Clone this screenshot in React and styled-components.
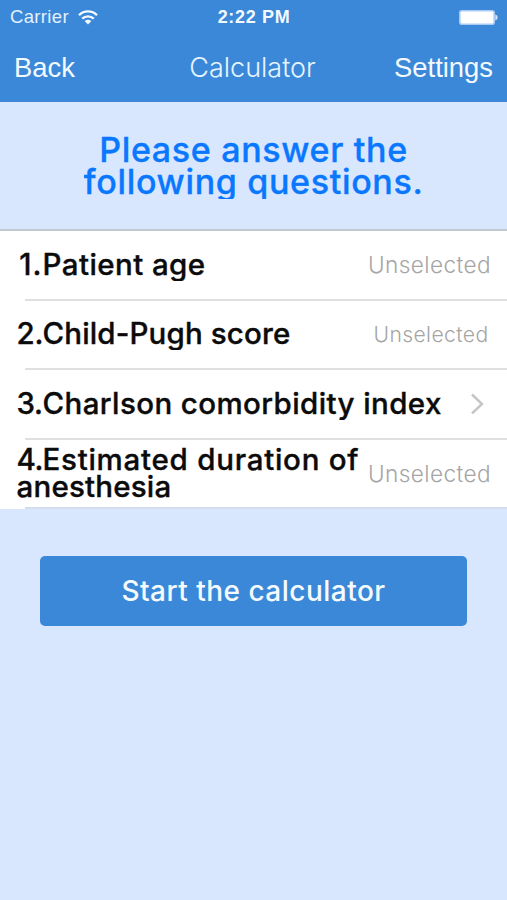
import React from "react";
import styled, { createGlobalStyle } from "styled-components";

const GlobalStyle = createGlobalStyle`
  * { box-sizing: border-box; }
  body { margin: 0; background: #d9e7fe; }
`;

const Screen = styled.div`
  width: 507px;
  height: 900px;
  display: flex;
  flex-direction: column;
  background: #d9e7fe;
  font-family: Inter, "Liberation Sans", sans-serif;
  overflow: hidden;
`;

const Header = styled.header`
  height: 102px;
  flex: none;
  background: #3c88d8;
  border-bottom: 1px solid #3f87d2;
  color: #f2faff;
  font-family: "Liberation Sans", sans-serif;
`;

const StatusBar = styled.div`
  height: 34px;
  display: grid;
  grid-template-columns: 1fr auto 1fr;
  align-items: center;
  padding: 0 9px 0 10px;
`;

const Carrier = styled.div`
  display: flex;
  align-items: center;
  gap: 9px;
  font-size: 18.5px;
  line-height: 34px;
  letter-spacing: 0.35px;
  color: #e2f1fe;
`;

const Clock = styled.div`
  font-size: 18px;
  font-weight: 700;
  line-height: 34px;
  letter-spacing: 0.65px;
`;

const BatterySlot = styled.div`
  display: flex;
  justify-content: flex-end;
`;

const NavBar = styled.nav`
  height: 67px;
  display: grid;
  grid-template-columns: 1fr auto 1fr;
  align-items: center;
  padding: 0 14px 0 14px;
`;

const NavButton = styled.button`
  justify-self: ${(p) => p.$side};
  padding: 0;
  border: 0;
  background: none;
  color: inherit;
  font: 400 27.4px/67px "Liberation Sans", sans-serif;
`;

const NavTitle = styled.h1`
  margin: 0;
  padding-right: 2px;
  font: 300 27px/67px Inter, sans-serif;
  color: #e6f5ff;
`;

const Intro = styled.section`
  height: 129px;
  flex: none;
  padding-top: 32px;
  border-bottom: 2px solid #c2c8d0;
  display: flex;
  justify-content: center;
`;

const IntroText = styled.h2`
  margin: 0;
  height: 65px;
  overflow: hidden;
  text-align: center;
  font-size: 34px;
  font-weight: 500;
  -webkit-text-stroke: 0.35px currentColor;
  line-height: 32px;
  letter-spacing: 0.67px;
  color: #0a78fe;
`;

const QuestionList = styled.ul`
  margin: 0;
  padding: 0;
  list-style: none;
  flex: none;
  background: #fff;
`;

const QuestionRow = styled.li`
  height: ${(p) => p.$height}px;
  display: flex;
  align-items: center;
  justify-content: space-between;
  padding: 0 ${(p) => p.$right}px 3px 16.5px;
  background: linear-gradient(${(p) => p.$rule}, ${(p) => p.$rule}) 25px 100% / 100% 2px no-repeat;
`;

const QuestionLabel = styled.div`
  height: ${(p) => (p.$lines === 2 ? 54 : 30)}px;
  margin-bottom: ${(p) => (p.$lines === 2 ? 0 : -2)}px;
  overflow: hidden;
  font-size: 29.5px;
  font-weight: 500;
  -webkit-text-stroke: 0.35px currentColor;
  line-height: 27px;
  white-space: nowrap;
  color: #0b0b0b;
`;

const LabelLine = styled.div`
  display: flex;
  letter-spacing: ${(p) => p.$spacing}px;
`;

const QuestionNumber = styled.span`
  width: 26px;
  flex: none;
  display: flex;
  justify-content: ${(p) => (p.$narrow ? "flex-end" : "flex-start")};
  letter-spacing: ${(p) => (p.$narrow ? 1 : -0.3)}px;
`;

const Answer = styled.span`
  font-size: ${(p) => p.$size}px;
  font-weight: 300;
  letter-spacing: 0.4px;
  color: #a5a5a5;
`;

const StartButton = styled.button`
  width: 427px;
  height: 70px;
  margin: 47px 0 0 40px;
  padding: 1px 0 0;
  border: 0;
  border-radius: 5px;
  background: #3c88d8;
  color: #f4fbff;
  font: 500 28px/69px Inter, sans-serif;
  letter-spacing: 0.48px;
`;

const questions = [
  { number: "1.", lines: [["Patient age", 0.43]], answer: 22.6, right: 16, height: 70 },
  { number: "2.", lines: [["Child-Pugh score", 0.15]], answer: 21.1, right: 18.5, height: 69 },
  { number: "3.", lines: [["Charlson comorbidity index", 0.4]], right: 22, height: 70 },
  { number: "4.", lines: [["Estimated duration of", 0.74], ["anesthesia", 0.2]], answer: 22.6, right: 16, height: 69, last: true },
];

const WifiIcon = () => (
  <svg width="20" height="15" viewBox="0 0 20 15" fill="none" stroke="#f4fbff" strokeWidth="2.3">
    <path d="M1 5.2C6 .2 14 .2 19 5.2" />
    <path d="M4.2 8.7c3.3-3.2 8.3-3.2 11.6 0" />
    <path d="M6.7 11.2c1.9-1.8 4.7-1.8 6.6 0L10 14.5z" fill="#f4fbff" stroke="none" />
  </svg>
);

const BatteryIcon = () => (
  <svg width="39" height="15" viewBox="0 0 39 15">
    <rect x=".8" y=".8" width="34.4" height="13.4" rx="2" fill="#fff" stroke="#a9cbf3" strokeWidth="1.6" />
    <path d="M36.3 4.6c3 .6 3 5.2 0 5.8z" fill="#d3e6fb" />
  </svg>
);

const Chevron = () => (
  <svg width="15" height="21" viewBox="0 0 15 21" fill="none" stroke="#c6c6c8" strokeWidth="2.5">
    <path d="M2 1.5 12 11 2 20.5" />
  </svg>
);

export default function App() {
  return (
    <Screen>
      <GlobalStyle />
      <Header>
        <StatusBar>
          <Carrier>Carrier<WifiIcon /></Carrier>
          <Clock>2:22 PM</Clock>
          <BatterySlot><BatteryIcon /></BatterySlot>
        </StatusBar>
        <NavBar>
          <NavButton $side="start">Back</NavButton>
          <NavTitle>Calculator</NavTitle>
          <NavButton $side="end">Settings</NavButton>
        </NavBar>
      </Header>
      <Intro>
        <IntroText>Please answer the<br />following questions.</IntroText>
      </Intro>
      <QuestionList>
        {questions.map((q) => (
          <QuestionRow key={q.number} $height={q.height} $right={q.right} $rule={q.last ? "#d3dded" : "#e0e0e1"}>
            <QuestionLabel $lines={q.lines.length}>
              {q.lines.map(([text, spacing], i) => (
                <LabelLine key={text} $spacing={spacing}>
                  {i === 0 && <QuestionNumber $narrow={q.number === "1."}>{q.number}</QuestionNumber>}
                  {text}
                </LabelLine>
              ))}
            </QuestionLabel>
            {q.answer ? <Answer $size={q.answer}>Unselected</Answer> : <Chevron />}
          </QuestionRow>
        ))}
      </QuestionList>
      <StartButton>Start the calculator</StartButton>
    </Screen>
  );
}
